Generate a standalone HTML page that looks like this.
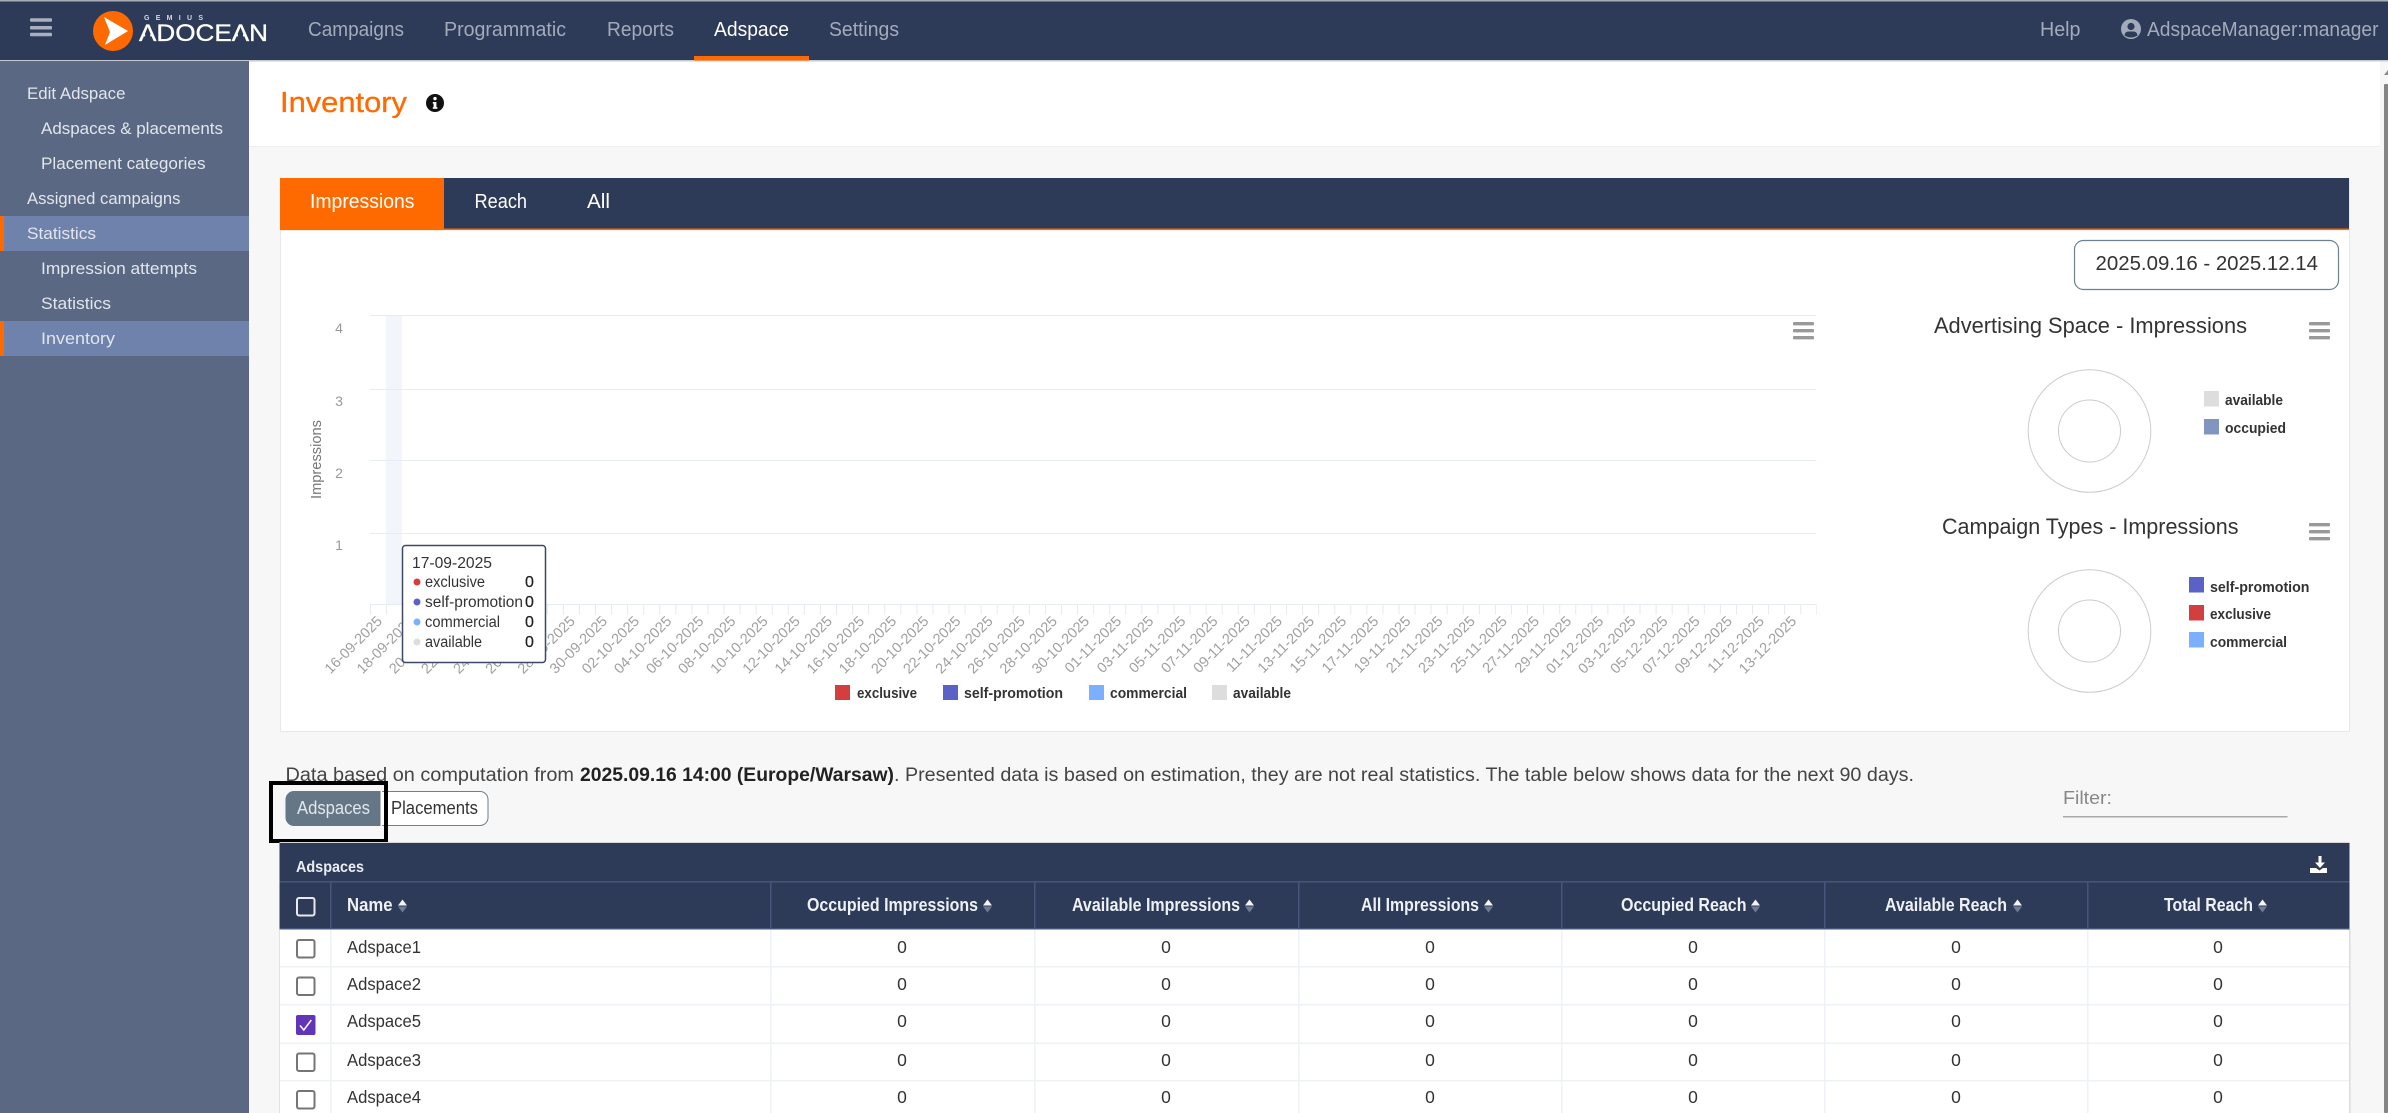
<!DOCTYPE html>
<html lang="en"><head><meta charset="utf-8"><title>Inventory</title>
<style>
html,body{margin:0;padding:0;width:2388px;height:1113px;overflow:hidden;background:#f7f7f7}
svg{display:block;font-family:"Liberation Sans",Arial,sans-serif}
text{white-space:pre}
</style></head><body>
<svg xmlns="http://www.w3.org/2000/svg" width="2388" height="1113" viewBox="0 0 2388 1113">
<!-- backgrounds -->
<rect width="2388" height="1113" fill="#f7f7f7"/>
<rect x="249" y="61" width="2131" height="85" fill="#fff"/>
<rect x="249" y="146" width="2131" height="1" fill="#efefef"/>
<!-- scrollbar -->
<rect x="2384" y="84" width="4" height="1029" fill="#858585" rx="1"/>
<path d="M2384 75 l4 -5 v5z" fill="#8a8a8a"/>
<!-- navbar -->
<rect width="2388" height="61" fill="#2e3b58"/>
<rect width="2388" height="1.5" fill="#a8adb6"/>
<rect y="60" width="2388" height="1.5" fill="#c4c9d2"/>
<g fill="#a9b0bd"><rect x="30" y="18.300" width="22" height="3.500" rx="1"/><rect x="30" y="26" width="22" height="3.500" rx="1"/><rect x="30" y="32.700" width="22" height="3.500" rx="1"/></g>
<circle cx="113" cy="31" r="20" fill="#ff6a00"/>
<path d="M104 17 L128 31 L105 45 L110 32 Z" fill="#fff"/>
<text x="144" y="20" font-size="7" font-weight="bold" fill="#d5d9e0" textLength="59" lengthAdjust="spacing">GEMIUS</text>
<text x="139" y="41" font-size="24" fill="#fff" stroke="#fff" stroke-width=".35" textLength="129" lengthAdjust="spacingAndGlyphs">ADOCEAN</text>
<rect x="145.200" y="33.500" width="5" height="3.200" fill="#2e3b58"/>
<rect x="238" y="33.500" width="5" height="3.200" fill="#2e3b58"/>
<g font-size="20" fill="#a3abbb">
<text x="308" y="36" textLength="96" lengthAdjust="spacingAndGlyphs">Campaigns</text>
<text x="444" y="36" textLength="122" lengthAdjust="spacingAndGlyphs">Programmatic</text>
<text x="607" y="36" textLength="67" lengthAdjust="spacingAndGlyphs">Reports</text>
<text x="714" y="36" textLength="75" lengthAdjust="spacingAndGlyphs" fill="#fff">Adspace</text>
<text x="829" y="36" textLength="70" lengthAdjust="spacingAndGlyphs">Settings</text>
<text x="2040" y="36" textLength="40.5" lengthAdjust="spacingAndGlyphs">Help</text>
<text x="2147" y="36" textLength="231.5" lengthAdjust="spacingAndGlyphs">AdspaceManager:manager</text>
</g>
<rect x="694" y="56" width="115" height="4.5" fill="#ff6a00"/>
<circle cx="2131" cy="29" r="10" fill="#a3abbb"/>
<circle cx="2131" cy="26.5" r="3.6" fill="#2e3b58"/>
<path d="M2124.5 35.5 Q2125 31.5 2128.5 31.5 L2133.5 31.5 Q2137 31.5 2137.5 35.5 Q2131 39.5 2124.5 35.5Z" fill="#2e3b58"/>
<!-- sidebar -->
<rect y="61" width="249" height="1052" fill="#5a6883"/>
<rect y="216" width="249" height="35" fill="#6f82ab"/>
<rect y="321" width="249" height="35" fill="#6f82ab"/>
<rect y="216" width="4" height="35" fill="#ff6a00"/>
<rect y="321" width="4" height="35" fill="#ff6a00"/>
<g font-size="17" fill="#e2e6ec">
<text x="27" y="99" textLength="98.5" lengthAdjust="spacingAndGlyphs">Edit Adspace</text>
<text x="41" y="134" textLength="182" lengthAdjust="spacingAndGlyphs">Adspaces &amp; placements</text>
<text x="41" y="169" textLength="164.5" lengthAdjust="spacingAndGlyphs">Placement categories</text>
<text x="27" y="204" textLength="153.5" lengthAdjust="spacingAndGlyphs">Assigned campaigns</text>
<text x="27" y="239" textLength="69" lengthAdjust="spacingAndGlyphs">Statistics</text>
<text x="41" y="274" textLength="156" lengthAdjust="spacingAndGlyphs">Impression attempts</text>
<text x="41" y="309" textLength="70" lengthAdjust="spacingAndGlyphs">Statistics</text>
<text x="41" y="344" textLength="74" lengthAdjust="spacingAndGlyphs">Inventory</text>
</g>
<!-- title -->
<text x="280" y="112" font-size="29" fill="#ff6a00" textLength="127" lengthAdjust="spacingAndGlyphs" stroke="#ff6a00" stroke-width=".3">Inventory</text>
<circle cx="435" cy="103" r="9" fill="#111"/>
<rect x="433.6" y="102" width="2.8" height="6.5" fill="#fff"/><rect x="432.8" y="102" width="3" height="1.6" fill="#fff"/><rect x="432.8" y="107.2" width="4.6" height="1.6" fill="#fff"/>
<circle cx="435" cy="98.6" r="1.7" fill="#fff"/>
<!-- chart panel -->
<rect x="280.5" y="178.5" width="2069" height="553" fill="#fff" stroke="#e8e8e8"/>
<rect x="280" y="178" width="2069" height="52" fill="#2e3b58"/>
<rect x="280" y="228.5" width="2069" height="1.6" fill="#ff6a00"/>
<rect x="280" y="178" width="164" height="52" fill="#ff6a00"/>
<g font-size="20" fill="#fff">
<text x="310" y="208" textLength="104.5" lengthAdjust="spacingAndGlyphs">Impressions</text>
<text x="474.5" y="208" textLength="52.5" lengthAdjust="spacingAndGlyphs">Reach</text>
<text x="587" y="208" textLength="23" lengthAdjust="spacingAndGlyphs">All</text>
</g>
<rect x="2074.5" y="240.5" width="264" height="49" rx="9" fill="#fff" stroke="#6e7f8e" stroke-width="1.2"/>
<text x="2095.5" y="270" font-size="20" fill="#333" textLength="222.5" lengthAdjust="spacingAndGlyphs">2025.09.16 - 2025.12.14</text>
<!-- main chart -->
<rect x="386" y="315" width="16" height="289" fill="#f2f5fa"/>
<g stroke="#e6ebf5" stroke-width="1"><path d="M370 315.5H1816M370 389.5H1816M370 460.5H1816M370 533.5H1816M370 604.5H1816"/></g>
<line x1="370" y1="609.5" x2="1817" y2="609.5" stroke="#e6e9f0" stroke-width="10" stroke-dasharray="1 15.07"/>
<g font-size="14" fill="#999" text-anchor="middle">
<text x="339" y="333">4</text><text x="339" y="406">3</text><text x="339" y="478">2</text><text x="339" y="550">1</text>
</g>
<text transform="translate(321 499) rotate(-90)" font-size="14.5" fill="#777" textLength="79" lengthAdjust="spacingAndGlyphs">Impressions</text>
<g font-size="14.5" fill="#a0a0a0" text-anchor="end">
<text transform="translate(383 622) rotate(-45)">16-09-2025</text>
<text transform="translate(415.1 622) rotate(-45)">18-09-2025</text>
<text transform="translate(447.3 622) rotate(-45)">20-09-2025</text>
<text transform="translate(479.4 622) rotate(-45)">22-09-2025</text>
<text transform="translate(511.6 622) rotate(-45)">24-09-2025</text>
<text transform="translate(543.7 622) rotate(-45)">26-09-2025</text>
<text transform="translate(575.8 622) rotate(-45)">28-09-2025</text>
<text transform="translate(608 622) rotate(-45)">30-09-2025</text>
<text transform="translate(640.1 622) rotate(-45)">02-10-2025</text>
<text transform="translate(672.3 622) rotate(-45)">04-10-2025</text>
<text transform="translate(704.4 622) rotate(-45)">06-10-2025</text>
<text transform="translate(736.5 622) rotate(-45)">08-10-2025</text>
<text transform="translate(768.7 622) rotate(-45)">10-10-2025</text>
<text transform="translate(800.8 622) rotate(-45)">12-10-2025</text>
<text transform="translate(833 622) rotate(-45)">14-10-2025</text>
<text transform="translate(865.1 622) rotate(-45)">16-10-2025</text>
<text transform="translate(897.2 622) rotate(-45)">18-10-2025</text>
<text transform="translate(929.4 622) rotate(-45)">20-10-2025</text>
<text transform="translate(961.5 622) rotate(-45)">22-10-2025</text>
<text transform="translate(993.7 622) rotate(-45)">24-10-2025</text>
<text transform="translate(1025.8 622) rotate(-45)">26-10-2025</text>
<text transform="translate(1057.9 622) rotate(-45)">28-10-2025</text>
<text transform="translate(1090.1 622) rotate(-45)">30-10-2025</text>
<text transform="translate(1122.2 622) rotate(-45)">01-11-2025</text>
<text transform="translate(1154.4 622) rotate(-45)">03-11-2025</text>
<text transform="translate(1186.5 622) rotate(-45)">05-11-2025</text>
<text transform="translate(1218.6 622) rotate(-45)">07-11-2025</text>
<text transform="translate(1250.8 622) rotate(-45)">09-11-2025</text>
<text transform="translate(1282.9 622) rotate(-45)">11-11-2025</text>
<text transform="translate(1315.1 622) rotate(-45)">13-11-2025</text>
<text transform="translate(1347.2 622) rotate(-45)">15-11-2025</text>
<text transform="translate(1379.3 622) rotate(-45)">17-11-2025</text>
<text transform="translate(1411.5 622) rotate(-45)">19-11-2025</text>
<text transform="translate(1443.6 622) rotate(-45)">21-11-2025</text>
<text transform="translate(1475.8 622) rotate(-45)">23-11-2025</text>
<text transform="translate(1507.9 622) rotate(-45)">25-11-2025</text>
<text transform="translate(1540 622) rotate(-45)">27-11-2025</text>
<text transform="translate(1572.2 622) rotate(-45)">29-11-2025</text>
<text transform="translate(1604.3 622) rotate(-45)">01-12-2025</text>
<text transform="translate(1636.5 622) rotate(-45)">03-12-2025</text>
<text transform="translate(1668.6 622) rotate(-45)">05-12-2025</text>
<text transform="translate(1700.7 622) rotate(-45)">07-12-2025</text>
<text transform="translate(1732.9 622) rotate(-45)">09-12-2025</text>
<text transform="translate(1765 622) rotate(-45)">11-12-2025</text>
<text transform="translate(1797.2 622) rotate(-45)">13-12-2025</text>
</g>
<!-- tooltip -->
<rect x="402.5" y="545.5" width="143" height="117" rx="3" fill="#fff" stroke="#3d4a66" stroke-width="1.5"/>
<text x="412" y="568" font-size="15.5" fill="#333" textLength="80" lengthAdjust="spacingAndGlyphs">17-09-2025</text>
<circle cx="417" cy="582" r="3.5" fill="#d33f3f"/><circle cx="417" cy="602" r="3.5" fill="#5a62c7"/><circle cx="417" cy="622" r="3.5" fill="#7cb0ff"/><circle cx="417" cy="642" r="3.5" fill="#ddd"/>
<g font-size="15.5" fill="#333">
<text x="425" y="587" textLength="60" lengthAdjust="spacingAndGlyphs">exclusive</text>
<text x="425" y="607" textLength="98" lengthAdjust="spacingAndGlyphs">self-promotion</text>
<text x="425" y="627" textLength="75" lengthAdjust="spacingAndGlyphs">commercial</text>
<text x="425" y="647" textLength="57" lengthAdjust="spacingAndGlyphs">available</text>
</g>
<g font-size="16" fill="#222" stroke="#222" stroke-width=".25">
<text x="525" y="587">0</text><text x="525" y="607">0</text><text x="525" y="627">0</text><text x="525" y="647">0</text>
</g>
<!-- chart legend -->
<rect x="835" y="685" width="15" height="15" fill="#d33f3f"/><rect x="943" y="685" width="15" height="15" fill="#5a62c7"/><rect x="1089" y="685" width="15" height="15" fill="#7cb0ff"/><rect x="1212" y="685" width="15" height="15" fill="#ddd"/>
<g font-size="15" font-weight="bold" fill="#333">
<text x="857" y="698" textLength="60" lengthAdjust="spacingAndGlyphs">exclusive</text>
<text x="964" y="698" textLength="99" lengthAdjust="spacingAndGlyphs">self-promotion</text>
<text x="1110" y="698" textLength="77" lengthAdjust="spacingAndGlyphs">commercial</text>
<text x="1233" y="698" textLength="58" lengthAdjust="spacingAndGlyphs">available</text>
</g>
<!-- menus -->
<g fill="#999">
<rect x="1793" y="322" width="21" height="3.4" rx="1"/><rect x="1793" y="329" width="21" height="3.4" rx="1"/><rect x="1793" y="336" width="21" height="3.4" rx="1"/>
<rect x="2309" y="322" width="21" height="3.4" rx="1"/><rect x="2309" y="329" width="21" height="3.4" rx="1"/><rect x="2309" y="336" width="21" height="3.4" rx="1"/>
<rect x="2309" y="523" width="21" height="3.4" rx="1"/><rect x="2309" y="530" width="21" height="3.4" rx="1"/><rect x="2309" y="537" width="21" height="3.4" rx="1"/>
</g>
<!-- pies -->
<text x="1934" y="333" font-size="22" fill="#333" textLength="313" lengthAdjust="spacingAndGlyphs">Advertising Space - Impressions</text>
<text x="1942" y="534" font-size="22" fill="#333" textLength="296.5" lengthAdjust="spacingAndGlyphs">Campaign Types - Impressions</text>
<g fill="none" stroke="#ccc" stroke-width="1"><circle cx="2089.5" cy="431" r="61.3"/><circle cx="2089.5" cy="431" r="31"/><circle cx="2089.5" cy="631" r="61.3"/><circle cx="2089.5" cy="631" r="31"/></g>
<rect x="2204" y="391" width="15" height="15.5" fill="#ddd"/><rect x="2204" y="419" width="15" height="15.5" fill="#8294c0"/>
<rect x="2189" y="577" width="15" height="15.5" fill="#5a62c7"/><rect x="2189" y="605" width="15" height="15.5" fill="#d33f3f"/><rect x="2189" y="632" width="15" height="15.5" fill="#7cb0ff"/>
<g font-size="15" font-weight="bold" fill="#333">
<text x="2225" y="405" textLength="58" lengthAdjust="spacingAndGlyphs">available</text>
<text x="2225" y="433" textLength="61" lengthAdjust="spacingAndGlyphs">occupied</text>
<text x="2210" y="592" textLength="99.5" lengthAdjust="spacingAndGlyphs">self-promotion</text>
<text x="2210" y="619" textLength="61" lengthAdjust="spacingAndGlyphs">exclusive</text>
<text x="2210" y="647" textLength="77" lengthAdjust="spacingAndGlyphs">commercial</text>
</g>
<!-- data line -->
<g font-size="19" fill="#444">
<text x="285.5" y="781" textLength="288.5" lengthAdjust="spacingAndGlyphs">Data based on computation from</text>
<text x="580" y="781" font-weight="bold" fill="#222" textLength="314" lengthAdjust="spacingAndGlyphs">2025.09.16 14:00 (Europe/Warsaw)</text>
<text x="894" y="781" textLength="1020" lengthAdjust="spacingAndGlyphs">. Presented data is based on estimation, they are not real statistics. The table below shows data for the next 90 days.</text>
</g>
<!-- button group -->
<path d="M381 791.5H480a8 8 0 0 1 8 8V817.5a8 8 0 0 1 -8 8H381Z" fill="#fff" stroke="#6f7f8d" stroke-width="1"/>
<path d="M381 791H294a8.500 8.500 0 0 0 -8.500 8.500V817.500a8.500 8.500 0 0 0 8.500 8.500H381Z" fill="#657786"/>
<rect x="380.500" y="791" width="1.500" height="35" fill="#fff"/>
<text x="297" y="814" font-size="18" fill="#e3e7ec" textLength="73" lengthAdjust="spacingAndGlyphs">Adspaces</text>
<text x="391" y="814" font-size="18" fill="#333" textLength="87" lengthAdjust="spacingAndGlyphs">Placements</text>
<rect x="271" y="783" width="115" height="58" fill="none" stroke="#000" stroke-width="4"/>
<!-- filter -->
<text x="2063" y="804" font-size="18.500" fill="#888" textLength="49" lengthAdjust="spacingAndGlyphs">Filter:</text>
<rect x="2063" y="816" width="224.500" height="1.500" fill="#aaa"/>
<!-- table -->
<rect x="279.500" y="929" width="2070" height="184" fill="#fff"/>
<rect x="279" y="929" width="1" height="184" fill="#e3e3e3"/>
<rect x="2349" y="929" width="1.500" height="184" fill="#dcdcdc"/>
<rect x="279.500" y="842" width="2070" height="1" fill="#d8d8d8"/>
<rect x="279.500" y="843" width="2070" height="86" fill="#2e3b58"/>
<rect x="279.500" y="881" width="2070" height="1.500" fill="#46557a"/>
<rect x="279.500" y="928" width="2070" height="1.500" fill="#46557a"/>
<g fill="#46557a"><rect x="330" y="882" width="1.500" height="47"/><rect x="770" y="882" width="1.500" height="47"/><rect x="1034" y="882" width="1.500" height="47"/><rect x="1298" y="882" width="1.500" height="47"/><rect x="1561" y="882" width="1.500" height="47"/><rect x="1824" y="882" width="1.500" height="47"/><rect x="2087" y="882" width="1.500" height="47"/></g>
<g fill="#eef1f6"><rect x="330" y="930" width="1.500" height="183"/><rect x="770" y="930" width="1.500" height="183"/><rect x="1034" y="930" width="1.500" height="183"/><rect x="1298" y="930" width="1.500" height="183"/><rect x="1561" y="930" width="1.500" height="183"/><rect x="1824" y="930" width="1.500" height="183"/><rect x="2087" y="930" width="1.500" height="183"/>
<rect x="280" y="966" width="2069" height="1.500"/><rect x="280" y="1004" width="2069" height="1.500"/><rect x="280" y="1042.500" width="2069" height="1.500"/><rect x="280" y="1080" width="2069" height="1.500"/></g>
<text x="296" y="872" font-size="16" font-weight="bold" fill="#eaedf2" textLength="68" lengthAdjust="spacingAndGlyphs">Adspaces</text>
<path d="M2318.500 856h3v6.500h3.500l-5 5.500l-5 -5.500h3.500z M2310 868h6l3.500 2.500l3.500 -2.500h4v5h-17z" fill="#fff"/>
<g font-size="18" font-weight="bold" fill="#eef1f5">
<text x="347" y="911" textLength="45.500" lengthAdjust="spacingAndGlyphs">Name</text>
<text x="807" y="911" textLength="171" lengthAdjust="spacingAndGlyphs">Occupied Impressions</text>
<text x="1072" y="911" textLength="168" lengthAdjust="spacingAndGlyphs">Available Impressions</text>
<text x="1361" y="911" textLength="118" lengthAdjust="spacingAndGlyphs">All Impressions</text>
<text x="1621" y="911" textLength="125.500" lengthAdjust="spacingAndGlyphs">Occupied Reach</text>
<text x="1885" y="911" textLength="122" lengthAdjust="spacingAndGlyphs">Available Reach</text>
<text x="2164" y="911" textLength="89" lengthAdjust="spacingAndGlyphs">Total Reach</text>
</g>
<g fill="#f2f4f7"><path d="M398 905.500l4.500 -6l4.500 6z"/><path d="M983 905.500l4.500 -6l4.500 6z"/><path d="M1245 905.500l4.500 -6l4.500 6z"/><path d="M1484 905.500l4.500 -6l4.500 6z"/><path d="M1751 905.500l4.500 -6l4.500 6z"/><path d="M2013 905.500l4.500 -6l4.500 6z"/><path d="M2258 905.500l4.500 -6l4.500 6z"/></g>
<g fill="#6f7b91"><path d="M398 906.500l4.500 6l4.500 -6z"/><path d="M983 906.500l4.500 6l4.500 -6z"/><path d="M1245 906.500l4.500 6l4.500 -6z"/><path d="M1484 906.500l4.500 6l4.500 -6z"/><path d="M1751 906.500l4.500 6l4.500 -6z"/><path d="M2013 906.500l4.500 6l4.500 -6z"/><path d="M2258 906.500l4.500 6l4.500 -6z"/></g>
<!-- checkboxes -->
<rect x="297" y="898" width="17.500" height="17.500" rx="2" fill="#2e3b58" stroke="#e8eaee" stroke-width="2"/>
<g fill="#fff" stroke="#757575" stroke-width="2">
<rect x="297" y="940" width="17.500" height="17.500" rx="2"/>
<rect x="297" y="977.500" width="17.500" height="17.500" rx="2"/>
<rect x="297" y="1053.500" width="17.500" height="17.500" rx="2"/>
<rect x="297" y="1091" width="17.500" height="17.500" rx="2"/>
</g>
<rect x="296" y="1015" width="19.500" height="20" rx="2" fill="#6134b8"/>
<path d="M300 1025.500l3.800 4.500l7.500 -10" fill="none" stroke="#fff" stroke-width="1.500"/>
<!-- rows -->
<g font-size="17.500" fill="#333">
<text x="347" y="953" textLength="74" lengthAdjust="spacingAndGlyphs">Adspace1</text>
<text x="347" y="990" textLength="74" lengthAdjust="spacingAndGlyphs">Adspace2</text>
<text x="347" y="1027" textLength="74" lengthAdjust="spacingAndGlyphs">Adspace5</text>
<text x="347" y="1066" textLength="74" lengthAdjust="spacingAndGlyphs">Adspace3</text>
<text x="347" y="1103" textLength="74" lengthAdjust="spacingAndGlyphs">Adspace4</text>
</g>
<g font-size="17.500" fill="#333" text-anchor="middle">
<text x="902" y="953">0</text><text x="1166" y="953">0</text><text x="1430" y="953">0</text><text x="1693" y="953">0</text><text x="1956" y="953">0</text><text x="2218" y="953">0</text>
<text x="902" y="990">0</text><text x="1166" y="990">0</text><text x="1430" y="990">0</text><text x="1693" y="990">0</text><text x="1956" y="990">0</text><text x="2218" y="990">0</text>
<text x="902" y="1027">0</text><text x="1166" y="1027">0</text><text x="1430" y="1027">0</text><text x="1693" y="1027">0</text><text x="1956" y="1027">0</text><text x="2218" y="1027">0</text>
<text x="902" y="1066">0</text><text x="1166" y="1066">0</text><text x="1430" y="1066">0</text><text x="1693" y="1066">0</text><text x="1956" y="1066">0</text><text x="2218" y="1066">0</text>
<text x="902" y="1103">0</text><text x="1166" y="1103">0</text><text x="1430" y="1103">0</text><text x="1693" y="1103">0</text><text x="1956" y="1103">0</text><text x="2218" y="1103">0</text>
</g>
</svg>
</body></html>
